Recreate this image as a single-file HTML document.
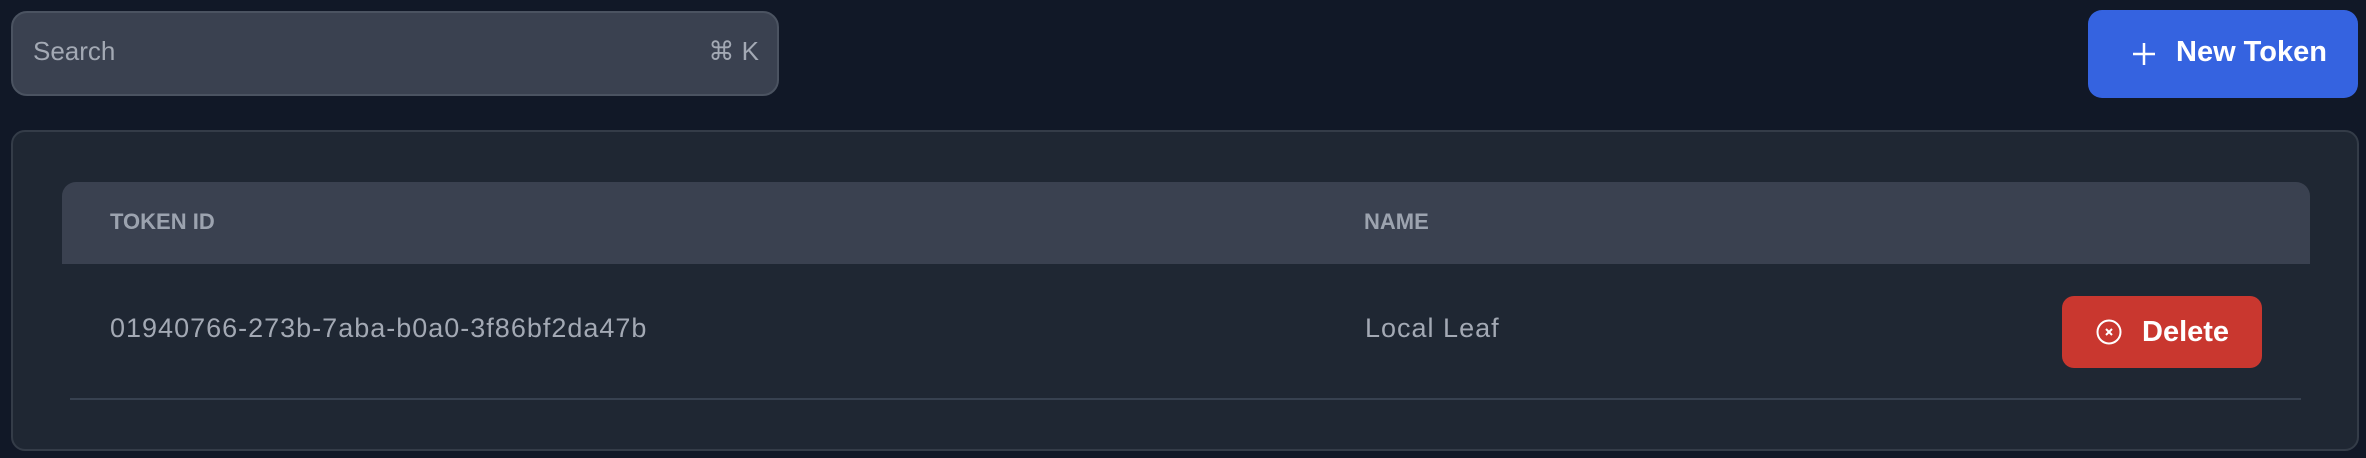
<!DOCTYPE html>
<html><head><style>
body{margin:0;width:2366px;height:458px;background:#111827;font-family:"Liberation Sans",sans-serif;position:relative;overflow:hidden}
.s{position:absolute;left:11px;top:11px;width:764px;height:81px;background:#3a4150;border:2px solid #4b5361;border-radius:16px}
.s span{position:absolute;top:-2px;line-height:81px;font-size:26px;color:#a3a9b4}
.nb{position:absolute;left:2088px;top:10px;width:270px;height:88px;background:#3563e0;border-radius:14px;color:#fff;font-size:29px;font-weight:bold;line-height:88px}
.p{position:absolute;left:11px;top:130px;width:2344px;height:317px;background:#1f2733;border:2px solid #343c48;border-radius:14px}
.h{position:absolute;left:49px;top:50px;width:2248px;height:82px;background:#3a4150;border-radius:14px 14px 0 0}
.h span{position:absolute;line-height:80px;font-size:22px;font-weight:bold;color:#9ca3af}
.r{position:absolute;top:183px;font-size:27px;color:#a3a9b4;line-height:1;letter-spacing:1px}
.d{position:absolute;left:2049px;top:164px;width:200px;height:72px;background:#c9372f;border-radius:12px;color:#fff;font-size:29px;font-weight:bold;line-height:72px}
.ln{position:absolute;left:57px;top:266px;width:2231px;height:2px;background:#374150}
</style></head><body>
<div class="s"><span style="left:20px">Search</span><span style="right:18px">⌘ K</span></div>
<div class="nb"><svg style="position:absolute;left:44px;top:32px" width="24" height="24" viewBox="0 0 24 24"><path d="M12 1V23M1 12H23" stroke="#fff" stroke-width="2.5"/></svg><span style="position:absolute;left:88px;top:-2px">New Token</span></div>
<div class="p">
<div class="h"><span style="left:48px">TOKEN ID</span><span style="left:1302px">NAME</span></div>
<div class="r" style="left:97px">01940766-273b-7aba-b0a0-3f86bf2da47b</div>
<div class="r" style="left:1352px">Local Leaf</div>
<div class="d"><svg style="position:absolute;left:34px;top:23px" width="26" height="26" viewBox="0 0 26 26"><circle cx="13" cy="13" r="11.5" fill="none" stroke="#fff" stroke-width="2"/><path d="M10 10L16 16M16 10L10 16" stroke="#fff" stroke-width="2"/></svg><span style="position:absolute;left:80px">Delete</span></div>
<div class="ln"></div>
</div>
</body></html>
